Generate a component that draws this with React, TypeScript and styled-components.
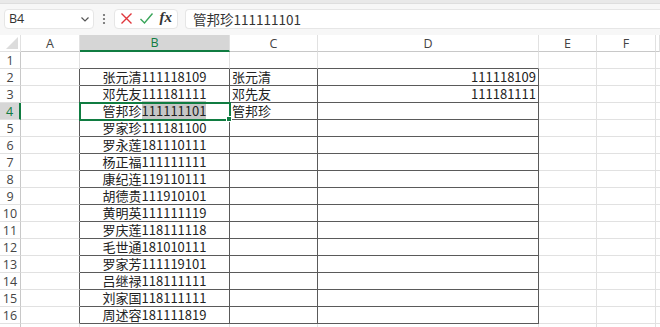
import styled, { createGlobalStyle } from 'styled-components';

const GlobalStyle = createGlobalStyle`
  html, body {
    margin: 0;
    padding: 0;
    background: #ffffff;
    overflow: hidden;
  }
`;

const CJK = `"Noto Sans CJK SC", "Noto Sans", sans-serif`;
const UI = `"Open Sans", "Noto Sans", "Liberation Sans", sans-serif`;
const GREEN = '#107c41';
const GRID = '#e1e1e1';
const DARK = '#5a5a5a';

const COLS = [21, 59, 150, 88, 221, 58, 59, 4];
const LETTERS = ['A', 'B', 'C', 'D', 'E', 'F', ''];

const DATA: [string, string, string][] = [
  ['张元清111118109', '张元清', '111118109'],
  ['邓先友111181111', '邓先友', '111181111'],
  ['管邦珍111111101', '管邦珍', ''],
  ['罗家珍111181100', '', ''],
  ['罗永莲181110111', '', ''],
  ['杨正福111111111', '', ''],
  ['康纪连119110111', '', ''],
  ['胡德贵111910101', '', ''],
  ['黄明英111111119', '', ''],
  ['罗庆莲118111118', '', ''],
  ['毛世通181010111', '', ''],
  ['罗家芳111119101', '', ''],
  ['吕继禄118111111', '', ''],
  ['刘家国118111111', '', ''],
  ['周述容181111819', '', ''],
];

const Page = styled.div`
  width: 660px;
  height: 327px;
  overflow: hidden;
  background: #ffffff;
`;

const TopStrip = styled.div`
  height: 3px;
  background: #e9e9e9;
  border-bottom: 1px solid #dedede;
`;

const FormulaBar = styled.div`
  height: 31px;
  background: #f7f7f7;
  display: flex;
  align-items: center;
  padding: 0 0 2px 4px;
  box-sizing: border-box;
`;

const NameBox = styled.div`
  width: 90px;
  height: 20px;
  box-sizing: border-box;
  background: #ffffff;
  border: 1px solid #e6e6e6;
  border-radius: 4px;
  display: flex;
  align-items: center;
  justify-content: space-between;
  padding: 0 3px 0 4px;
  font-family: ${UI};
  font-size: 12.5px;
  color: #333;
`;

const Dots = styled.div`
  width: 20px;
  display: flex;
  justify-content: center;
  color: #666;
`;

const IconBox = styled.div`
  width: 64px;
  height: 20px;
  box-sizing: border-box;
  background: #ffffff;
  border: 1px solid #e6e6e6;
  border-radius: 4px;
  display: flex;
  align-items: center;
  justify-content: space-around;
  padding: 0 2px;
`;

const Fx = styled.span`
  font-family: "Liberation Serif", serif;
  font-style: italic;
  font-weight: 700;
  font-size: 15px;
  color: #333;
  line-height: 1;
  margin-top: -2px;
`;

const FormulaInput = styled.div`
  flex: 1;
  height: 20px;
  margin-left: 7px;
  box-sizing: border-box;
  background: #ffffff;
  border: 1px solid #e6e6e6;
  border-right: none;
  border-radius: 4px 0 0 4px;
  display: flex;
  align-items: center;
  padding-left: 7px;
  font-family: ${CJK};
  font-size: 13.5px;
  color: #333;
`;

const Sheet = styled.div`
  display: grid;
  grid-template-columns: ${COLS.map((c) => `${c}px`).join(' ')};
  grid-auto-rows: 17px;
`;

const Corner = styled.div`
  position: relative;
  background: #ffffff;
  border-right: 1px solid ${GRID};
  border-bottom: 1px solid ${GRID};
  box-sizing: border-box;
  &::after {
    content: '';
    position: absolute;
    right: 2px;
    bottom: 2px;
    border-left: 12px solid transparent;
    border-bottom: 12px solid #dcdcdc;
  }
`;

const ColHead = styled.div<{ $active?: boolean }>`
  box-sizing: border-box;
  background: ${(p) => (p.$active ? '#d6d6d6' : '#ffffff')};
  border-right: 1px solid ${GRID};
  border-bottom: ${(p) => (p.$active ? `2px solid ${GREEN}` : `1px solid #c8c8c8`)};
  display: flex;
  align-items: center;
  justify-content: center;
  font-family: ${UI};
  font-size: 12.5px;
  color: ${(p) => (p.$active ? GREEN : '#444')};
`;

const RowHead = styled.div<{ $active?: boolean }>`
  box-sizing: border-box;
  background: ${(p) => (p.$active ? '#d6d6d6' : '#ffffff')};
  border-right: ${(p) => (p.$active ? `2px solid ${GREEN}` : `1px solid #c8c8c8`)};
  border-bottom: 1px solid ${GRID};
  display: flex;
  align-items: center;
  justify-content: center;
  font-family: ${UI};
  font-size: 12.5px;
  line-height: 15px;
  color: ${(p) => (p.$active ? GREEN : '#444')};
`;

const Cell = styled.div<{
  $align?: 'left' | 'center' | 'right';
  $right?: boolean;
  $bottom?: boolean;
  $active?: boolean;
}>`
  position: relative;
  box-sizing: border-box;
  border-right: 1px solid ${(p) => (p.$right ? DARK : GRID)};
  border-bottom: 1px solid ${(p) => (p.$bottom ? DARK : GRID)};
  font-family: ${CJK};
  font-size: 13px;
  line-height: 16px;
  color: #222;
  white-space: nowrap;
  text-align: ${(p) => p.$align ?? 'left'};
  padding: 0 2px;
  ${(p) =>
    p.$active &&
    `
    outline: 2px solid ${GREEN};
    outline-offset: -1px;
    z-index: 2;
    &::after {
      content: '';
      position: absolute;
      right: -3px;
      bottom: -3px;
      width: 4px;
      height: 4px;
      background: ${GREEN};
      border: 1px solid #fff;
    }
  `}
`;

const Highlight = styled.span`
  background: #c6c6c6;
`;

function ChevronDown() {
  return (
    <svg width="10" height="10" viewBox="0 0 10 10">
      <path d="M1.5 3.5 L5 7 L8.5 3.5" fill="none" stroke="#555" strokeWidth="1.2" />
    </svg>
  );
}

function VDots() {
  return (
    <svg width="4" height="12" viewBox="0 0 4 12">
      <circle cx="2" cy="2" r="1.1" fill="#666" />
      <circle cx="2" cy="6" r="1.1" fill="#666" />
      <circle cx="2" cy="10" r="1.1" fill="#666" />
    </svg>
  );
}

function Cross() {
  return (
    <svg width="13" height="13" viewBox="0 0 13 13">
      <path d="M1.5 1.5 L11.5 11.5 M11.5 1.5 L1.5 11.5" stroke="#e0353b" strokeWidth="1.4" fill="none" />
    </svg>
  );
}

function Check() {
  return (
    <svg width="15" height="13" viewBox="0 0 15 13">
      <path d="M1.5 7 L5.5 11 L13.5 1.5" stroke="#3aa55a" strokeWidth="1.4" fill="none" />
    </svg>
  );
}

export default function App() {
  const rows = [];
  for (let r = 1; r <= 17; r++) {
    const active = r === 4;
    const inTable = r >= 2 && r <= 16;
    const data = inTable ? DATA[r - 2] : ['', '', ''];
    const topEdge = r === 1;
    // row 17 is cut off by the window, its number is not visible
    rows.push(<RowHead key={`h${r}`} $active={active}>{r < 17 ? r : ''}</RowHead>);
    rows.push(<Cell key={`a${r}`} $right={inTable} />);
    rows.push(
      <Cell key={`b${r}`} $align="center" $right={inTable} $bottom={inTable || topEdge} $active={active}>
        {active ? (
          <>
            管邦珍<Highlight>111111101</Highlight>
          </>
        ) : (
          data[0]
        )}
      </Cell>,
    );
    rows.push(
      <Cell key={`c${r}`} $right={inTable} $bottom={inTable || topEdge}>
        {data[1]}
      </Cell>,
    );
    rows.push(
      <Cell key={`d${r}`} $align="right" $right={inTable} $bottom={inTable || topEdge}>
        {data[2]}
      </Cell>,
    );
    rows.push(<Cell key={`e${r}`} />);
    rows.push(<Cell key={`f${r}`} />);
    rows.push(<Cell key={`g${r}`} />);
  }

  return (
    <Page>
      <GlobalStyle />
      <TopStrip />
      <FormulaBar>
        <NameBox>
          <span>B4</span>
          <ChevronDown />
        </NameBox>
        <Dots>
          <VDots />
        </Dots>
        <IconBox>
          <Cross />
          <Check />
          <Fx>fx</Fx>
        </IconBox>
        <FormulaInput>管邦珍111111101</FormulaInput>
      </FormulaBar>
      <Sheet>
        <Corner />
        {LETTERS.map((l) => (
          <ColHead key={l || 'x'} $active={l === 'B'}>
            {l}
          </ColHead>
        ))}
        {rows}
      </Sheet>
    </Page>
  );
}
